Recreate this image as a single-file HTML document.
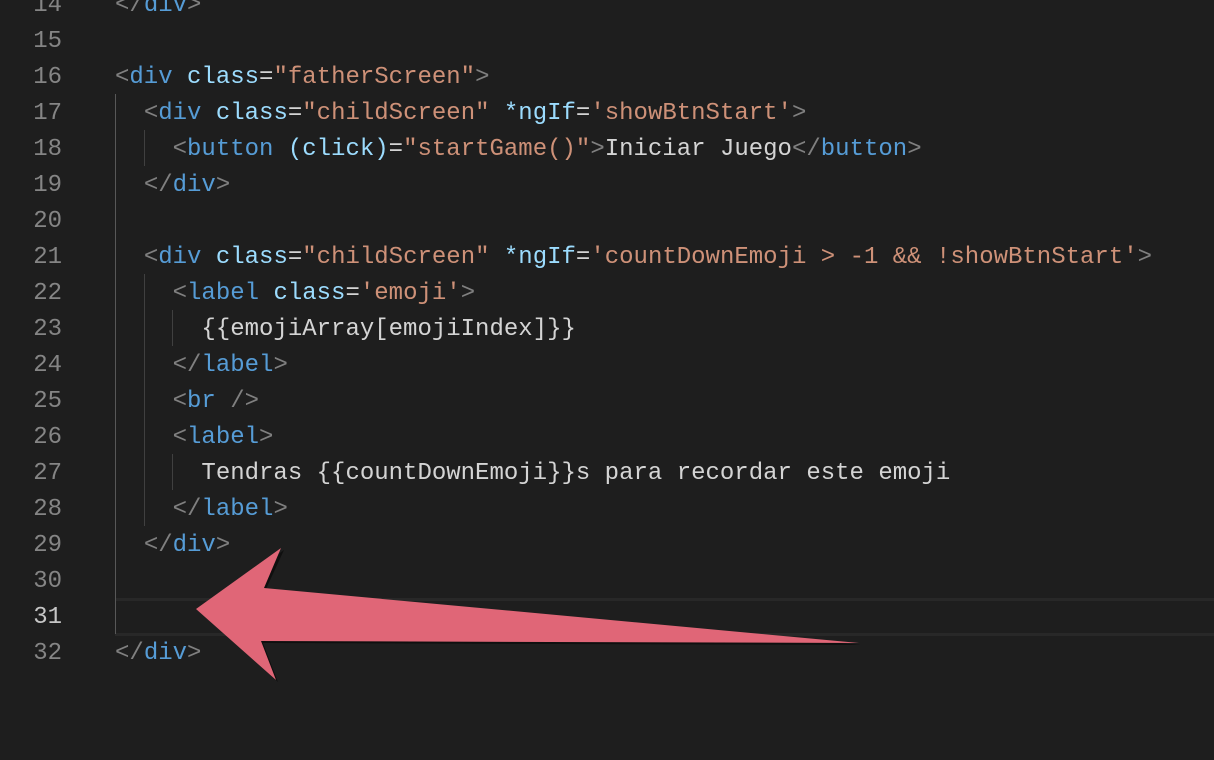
<!DOCTYPE html>
<html><head><meta charset="utf-8"><style>
html,body{margin:0;padding:0;background:#1e1e1e;width:1214px;height:760px;overflow:hidden;position:relative}
.l{position:absolute;left:0;height:36px;line-height:36px;font-family:"Liberation Mono",monospace;font-size:24px;white-space:pre;color:#d4d4d4;margin-top:2px}
.n{position:absolute;width:62px;text-align:right;color:#858585}
.c{position:absolute;left:115px}
.t{color:#569cd6}.p{color:#808080}.a{color:#9cdcfe}.s{color:#ce9178}
.g{position:absolute;width:1px;background:#404040}
</style></head><body>
<div style="position:absolute;left:115px;top:598px;width:1099px;height:32px;border-top:3px solid #282828;border-bottom:3px solid #282828"></div>
<div class="g" style="left:115px;top:94px;height:540px;background:#585858"></div>
<div class="g" style="left:144px;top:130px;height:36px"></div>
<div class="g" style="left:144px;top:274px;height:252px"></div>
<div class="g" style="left:172px;top:310px;height:36px"></div>
<div class="g" style="left:172px;top:454px;height:36px"></div>

<div class="l" style="top:-14px"><span class="n">14</span><span class="c"><span class="p">&lt;/</span><span class="t">div</span><span class="p">&gt;</span></span></div>
<div class="l" style="top:22px"><span class="n">15</span></div>
<div class="l" style="top:58px"><span class="n">16</span><span class="c"><span class="p">&lt;</span><span class="t">div</span> <span class="a">class</span>=<span class="s">"fatherScreen"</span><span class="p">&gt;</span></span></div>
<div class="l" style="top:94px"><span class="n">17</span><span class="c">  <span class="p">&lt;</span><span class="t">div</span> <span class="a">class</span>=<span class="s">"childScreen"</span> <span class="a">*ngIf</span>=<span class="s">'showBtnStart'</span><span class="p">&gt;</span></span></div>
<div class="l" style="top:130px"><span class="n">18</span><span class="c">    <span class="p">&lt;</span><span class="t">button</span> <span class="a">(click)</span>=<span class="s">"startGame()"</span><span class="p">&gt;</span>Iniciar Juego<span class="p">&lt;/</span><span class="t">button</span><span class="p">&gt;</span></span></div>
<div class="l" style="top:166px"><span class="n">19</span><span class="c">  <span class="p">&lt;/</span><span class="t">div</span><span class="p">&gt;</span></span></div>
<div class="l" style="top:202px"><span class="n">20</span></div>
<div class="l" style="top:238px"><span class="n">21</span><span class="c">  <span class="p">&lt;</span><span class="t">div</span> <span class="a">class</span>=<span class="s">"childScreen"</span> <span class="a">*ngIf</span>=<span class="s">'countDownEmoji &gt; -1 &amp;&amp; !showBtnStart'</span><span class="p">&gt;</span></span></div>
<div class="l" style="top:274px"><span class="n">22</span><span class="c">    <span class="p">&lt;</span><span class="t">label</span> <span class="a">class</span>=<span class="s">'emoji'</span><span class="p">&gt;</span></span></div>
<div class="l" style="top:310px"><span class="n">23</span><span class="c">      {{emojiArray[emojiIndex]}}</span></div>
<div class="l" style="top:346px"><span class="n">24</span><span class="c">    <span class="p">&lt;/</span><span class="t">label</span><span class="p">&gt;</span></span></div>
<div class="l" style="top:382px"><span class="n">25</span><span class="c">    <span class="p">&lt;</span><span class="t">br</span> <span class="p">/&gt;</span></span></div>
<div class="l" style="top:418px"><span class="n">26</span><span class="c">    <span class="p">&lt;</span><span class="t">label</span><span class="p">&gt;</span></span></div>
<div class="l" style="top:454px"><span class="n">27</span><span class="c">      Tendras {{countDownEmoji}}s para recordar este emoji</span></div>
<div class="l" style="top:490px"><span class="n">28</span><span class="c">    <span class="p">&lt;/</span><span class="t">label</span><span class="p">&gt;</span></span></div>
<div class="l" style="top:526px"><span class="n">29</span><span class="c">  <span class="p">&lt;/</span><span class="t">div</span><span class="p">&gt;</span></span></div>
<div class="l" style="top:562px"><span class="n">30</span></div>
<div class="l" style="top:598px"><span class="n" style="color:#c6c6c6">31</span></div>
<div class="l" style="top:634px"><span class="n">32</span><span class="c"><span class="p">&lt;/</span><span class="t">div</span><span class="p">&gt;</span></span></div>

<svg width="1214" height="760" style="position:absolute;left:0;top:0">
<polygon points="199,611 284,550 266,589 861,645 263,643 278,682" fill="#000" opacity="0.5"/>
<polygon points="196,609 281,548 264,588 859,643 261,641 276,680" fill="#e06677"/>
</svg>
</body></html>
